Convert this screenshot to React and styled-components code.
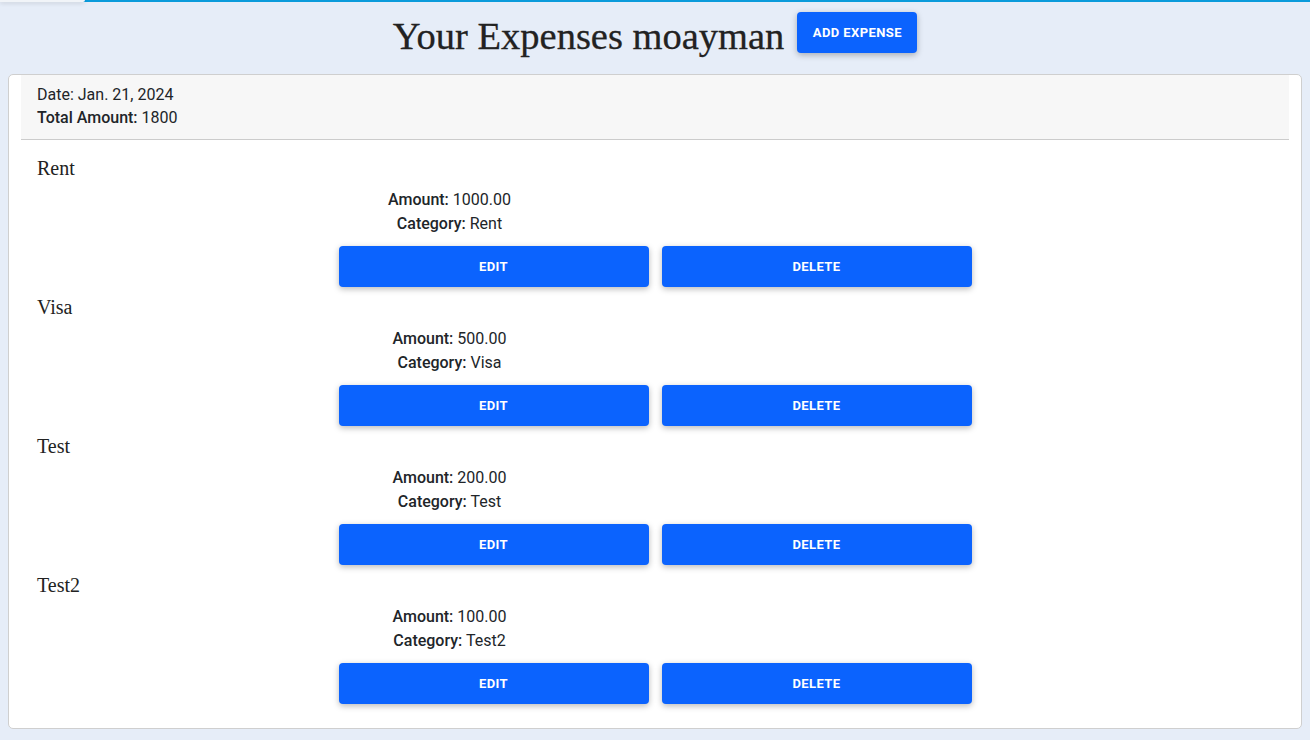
import React from "react";
import styled, { createGlobalStyle } from "styled-components";

const GlobalStyle = createGlobalStyle`
  html, body {
    margin: 0;
    padding: 0;
    background: #e6edf8;
  }
  body {
    font-family: Roboto, "Liberation Sans", Arial, sans-serif;
    color: #212529;
  }
`;

const expenses = [
  { id: 1, title: "Rent", amount: "1000.00", category: "Rent" },
  { id: 2, title: "Visa", amount: "500.00", category: "Visa" },
  { id: 3, title: "Test", amount: "200.00", category: "Test" },
  { id: 4, title: "Test2", amount: "100.00", category: "Test2" },
];

const Page = styled.div`
  position: relative;
  min-height: 740px;
  box-sizing: border-box;
  border-top: 2px solid #0a9bdb;
  padding-bottom: 12px;
`;

// leftover bit of a popover sitting over the top bar
const Ghost = styled.div`
  position: absolute;
  top: -2px;
  left: 0;
  width: 85px;
  height: 2px;
  background: #f1f4f8;
  box-shadow: 0 1px 4px rgba(0, 0, 0, 0.18);
  border-radius: 0 0 3px 0;
`;

const TopBar = styled.header`
  height: 72px;
  box-sizing: border-box;
  padding-top: 10px;
  display: flex;
  align-items: flex-start;
  justify-content: center;
  gap: 13px;
`;

const Title = styled.h1`
  margin: 0;
  font-family: "Liberation Serif", "DejaVu Serif", serif;
  font-weight: 400;
  font-size: 38.5px;
  color: #222;
  line-height: 1;
  padding-top: 5px;
  -webkit-text-stroke: 0.3px #222;
`;

const Button = styled.button`
  height: 41px;
  width: ${(p) => p.$w || "310px"};
  border: none;
  border-radius: 4px;
  background: #0b63fe;
  color: #fff;
  font-family: Roboto, "Liberation Sans", Arial, sans-serif;
  font-weight: 700;
  font-size: 13px;
  letter-spacing: 0.4px;
  text-transform: uppercase;
  box-shadow: 0 2px 6px rgba(0, 0, 0, 0.28);
  cursor: pointer;
`;

const Card = styled.section`
  margin: 0 8px;
  background: #fff;
  border: 1px solid #cfcfcf;
  border-radius: 5px;
  padding-bottom: 24px;
`;

const CardHead = styled.div`
  margin: 0 12px;
  background: #f7f7f7;
  border-bottom: 1px solid #cccccc;
  padding: 8px 16px 10px;
  font-size: 16px;
  line-height: 23px;
`;

const Strong = styled.strong`
  font-weight: 500;
`;

const Body = styled.div`
  padding: 0 28px;
`;

const Item = styled.div`
  padding-top: 8px;
  &:first-child {
    padding-top: 16px;
  }
`;

const ItemName = styled.h5`
  margin: 0;
  font-family: "Liberation Serif", "DejaVu Serif", serif;
  font-weight: 400;
  font-size: 20px;
  line-height: 24px;
  color: #222;
`;

const Column = styled.div`
  width: 633px;
  margin: 8px auto 0;
`;

const Details = styled.div`
  width: 222px;
  text-align: center;
  font-size: 16px;
  line-height: 24px;
`;

const Line = styled.p`
  margin: 0;
`;

const Actions = styled.div`
  display: flex;
  gap: 13px;
  margin-top: 10px;
`;

export default function App() {
  return (
    <>
      <GlobalStyle />
      <Page>
        <Ghost />
        <TopBar>
          <Title>Your Expenses moayman</Title>
          <Button $w="120px">Add Expense</Button>
        </TopBar>
        <Card>
          <CardHead>
            <Line>Date: Jan. 21, 2024</Line>
            <Line>
              <Strong>Total Amount:</Strong> 1800
            </Line>
          </CardHead>
          <Body>
            {expenses.map((e) => (
              <Item key={e.id}>
                <ItemName>{e.title}</ItemName>
                <Column>
                  <Details>
                    <Line>
                      <Strong>Amount:</Strong> {e.amount}
                    </Line>
                    <Line>
                      <Strong>Category:</Strong> {e.category}
                    </Line>
                  </Details>
                  <Actions>
                    <Button>Edit</Button>
                    <Button>Delete</Button>
                  </Actions>
                </Column>
              </Item>
            ))}
          </Body>
        </Card>
      </Page>
    </>
  );
}
